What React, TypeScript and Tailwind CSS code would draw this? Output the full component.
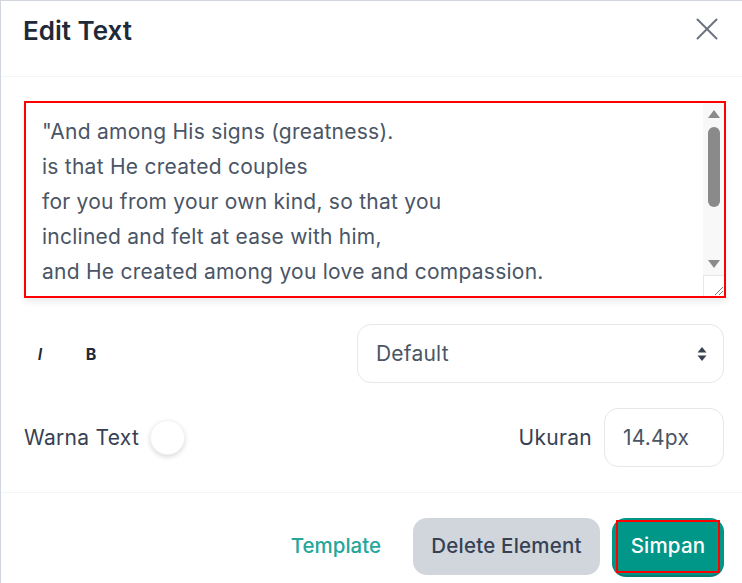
import { useState } from 'react';

const LINES = [
  '"And among His signs (greatness).',
  'is that He created couples',
  'for you from your own kind, so that you',
  'inclined and felt at ease with him,',
  'and He created among you love and compassion.',
  'Verily, in that are truly signs for people who think."',
];

export default function App() {
  const [size, setSize] = useState('14.4px');

  return (
    <div className="w-[742px] h-[583px] bg-white border-l border-t border-gray-300 overflow-hidden flex flex-col font-['Inter',sans-serif]">
      {/* Header */}
      <div className="h-[76px] flex items-start justify-between pl-[22px] pr-[24px] pt-[14px] border-b border-gray-100 flex-shrink-0">
        <h2 className="text-[26px] leading-[32px] font-semibold text-gray-800">Edit Text</h2>
        <button type="button" className="mt-[3px] w-[22px] h-[22px]">
          <svg width="22" height="22" viewBox="0 0 22 22" fill="none" stroke="#6b7280" strokeWidth="2" strokeLinecap="round">
            <line x1="1.5" y1="1.5" x2="20.5" y2="20.5" />
            <line x1="20.5" y1="1.5" x2="1.5" y2="20.5" />
          </svg>
        </button>
      </div>

      {/* Body */}
      <div className="pl-[23px] pr-[16px] pt-[24px] flex flex-col">
        <div className="h-[197px] border-2 border-[#ff0000] flex shadow-[0_4px_6px_rgba(0,0,0,0.08)]">
          <div className="flex-1 pl-[16px] pt-[11px] overflow-hidden text-[21px] tracking-[0.25px] leading-[35px] text-gray-600 whitespace-nowrap">
            {LINES.map((l) => (
              <div key={l}>{l}</div>
            ))}
          </div>
          {/* scrollbar */}
          <div className="w-[21px] flex flex-col bg-[#f8f8f8]">
            <div className="h-[22px] flex items-center justify-center">
              <svg width="12" height="8" viewBox="0 0 12 8"><polygon points="6,0 12,8 0,8" fill="#8a8a8a" /></svg>
            </div>
            <div className="mt-[2px] mx-auto w-[12px] h-[80px] rounded-full bg-[#8a8a8a]" />
            <div className="flex-1" />
            <div className="h-[22px] flex items-center justify-center">
              <svg width="12" height="8" viewBox="0 0 12 8"><polygon points="0,0 12,0 6,8" fill="#8a8a8a" /></svg>
            </div>
            <div className="h-[21px] bg-white border-l border-t border-gray-200 flex items-end justify-end">
              <svg width="12" height="12" viewBox="0 0 12 12" stroke="#7a7a7a" strokeWidth="1">
                <line x1="11" y1="3" x2="3" y2="11" />
                <line x1="11" y1="7" x2="7" y2="11" />
              </svg>
            </div>
          </div>
        </div>

        {/* Style row */}
        <div className="mt-[26px] mr-[2px] h-[59px] flex items-center justify-between">
          <div className="flex items-center gap-[19px]">
            <button type="button" className="w-[32px] text-[16px] italic font-semibold text-gray-800">I</button>
            <button type="button" className="w-[32px] text-[16px] font-bold text-gray-800">B</button>
          </div>
          <div className="w-[367px] h-[59px] rounded-[14px] border border-gray-200 flex items-center justify-between pl-[18px] pr-[16px] text-[21px] tracking-[0.2px] text-gray-600">
            <span>Default</span>
            <svg width="10" height="16" viewBox="0 0 10 16" fill="#374151">
              <polygon points="5,1 9.5,6.5 0.5,6.5" />
              <polygon points="0.5,9.5 9.5,9.5 5,15" />
            </svg>
          </div>
        </div>

        {/* Color / size row */}
        <div className="mt-[25px] mr-[2px] h-[59px] flex items-center justify-between">
          <div className="flex items-center">
            <span className="text-[21px] tracking-[0.3px] text-gray-700">Warna Text</span>
            <div className="ml-[11px] w-[35px] h-[35px] rounded-full bg-white shadow-[0_2px_5px_rgba(0,0,0,0.15)] border border-gray-100" />
          </div>
          <div className="flex items-center">
            <span className="text-[21px] tracking-[0.3px] text-gray-700">Ukuran</span>
            <input
              value={size}
              onChange={(e) => setSize(e.target.value)}
              className="ml-[12px] w-[120px] h-[59px] rounded-[14px] border border-gray-200 px-[18px] text-[21px] tracking-[0.2px] text-gray-600 outline-none"
            />
          </div>
        </div>
      </div>

      {/* Footer */}
      <div className="mt-[25px] border-t border-gray-100 pr-[18px] pt-[25px] flex items-center justify-end gap-[12px]">
        <button type="button" className="h-[57px] px-[20px] text-[20.5px] font-medium text-[#26a69a]">Template</button>
        <button type="button" className="h-[57px] w-[187px] rounded-[14px] bg-gray-300 text-[20.5px] tracking-[0.2px] font-medium text-gray-700">
          Delete Element
        </button>
        <button type="button" className="h-[57px] w-[112px] rounded-[14px] bg-[#009688] shadow-[0_2px_0_#0b7c71] flex items-center justify-center p-[2px]">
          <span className="w-[104px] h-[53px] border-2 border-[#ff0000] flex items-center justify-center text-[20.5px] tracking-[0.2px] font-medium text-white">
            Simpan
          </span>
        </button>
      </div>
    </div>
  );
}
